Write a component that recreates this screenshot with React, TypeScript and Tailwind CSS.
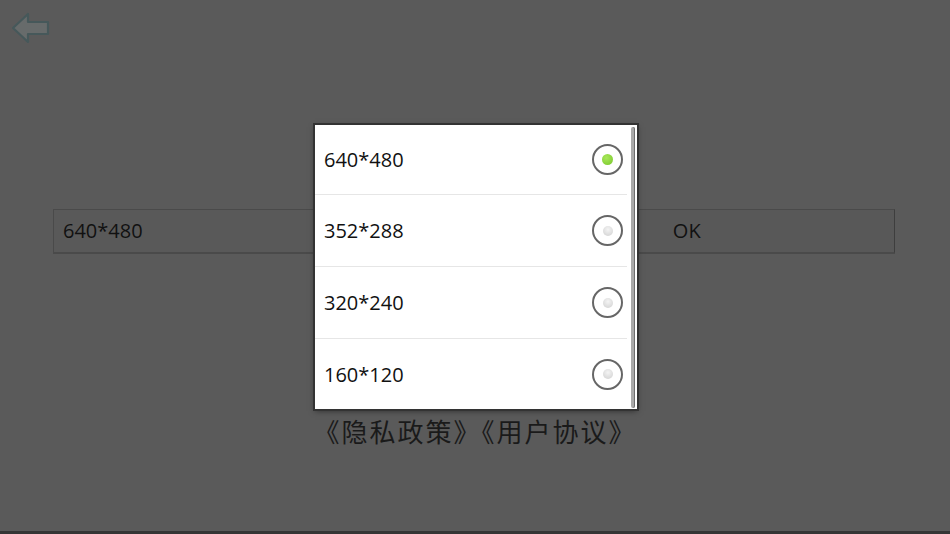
const options = ["640*480", "352*288", "320*240", "160*120"];

function BackArrow() {
  return (
    <svg width="40" height="32" viewBox="0 0 40 32" className="block">
      <path
        d="M2 16 L17 2 L17 10 L37 10 L37 22 L17 22 L17 30 Z"
        fill="#676b6b"
        stroke="#46585a"
        strokeWidth="2.2"
        strokeLinejoin="round"
      />
    </svg>
  );
}

function Radio({ checked }: { checked: boolean }) {
  return (
    <span className="flex h-[31px] w-[31px] items-center justify-center rounded-full border-2 border-[#666] bg-white">
      {checked ? (
        <span className="h-[11px] w-[11px] rounded-full bg-[radial-gradient(circle_at_40%_35%,#a8e85a,#78c62a)]" />
      ) : (
        <span className="h-[10px] w-[10px] rounded-full bg-[radial-gradient(circle_at_50%_35%,#f4f4f4,#cfcfcf)]" />
      )}
    </span>
  );
}

export default function App() {
  return (
    <div className="relative flex h-[534px] w-[950px] flex-col overflow-hidden bg-[#5a5a5a] font-['Open_Sans','Noto_Sans_CJK_SC',sans-serif]">
      <div className="ml-[11px] mt-[12px]">
        <BackArrow />
      </div>

      <div className="mx-[53px] mr-[55px] mt-[164px] flex h-[45px] pt-[1px] text-[20px] text-[#111]">
        <div className="flex flex-1 items-center border border-[#4a4a4a] bg-[#595959] pl-[9px] shadow-[0_1px_0_#4a4a4a]">
          640*480
        </div>
        <div className="flex flex-1 items-center justify-center border border-[#4a4a4a] border-r-[#3e3e3e] bg-[#585858] shadow-[0_1px_0_#4a4a4a]">
          OK
        </div>
      </div>

      <div className="mt-[163px] text-center font-['Noto_Sans_CJK_SC',sans-serif] text-[26px] leading-[30px] tracking-[2px] text-[#1a1a1a]">
        《隐私政策》《用户协议》
      </div>

      <div className="mt-auto h-[3px] bg-[#353535]" />

      <div className="absolute left-[315px] top-[125px] h-[284px] w-[322px] bg-white shadow-[0_0_0_2px_#333,0_2px_6px_rgba(0,0,0,0.5)]">
        <div className="flex h-full flex-col pr-[10px]">
          {options.map((opt, i) => (
            <div
              key={opt}
              className={`flex items-center justify-between pl-[9px] pr-[4px] ${i === 0 ? "h-[70px]" : i === 3 ? "h-[70px]" : "h-[72px]"} ${i < 3 ? "border-b border-[#e6e6e6]" : ""}`}
            >
              <span className="pt-[1px] text-[20px] text-[#111]">{opt}</span>
              <Radio checked={i === 0} />
            </div>
          ))}
        </div>
        <div className="absolute right-[2px] top-[2px] h-[281px] w-[4px] rounded-full bg-[#a9a9a9] shadow-[inset_-1px_0_0_#6f6f6f]" />
      </div>
    </div>
  );
}
